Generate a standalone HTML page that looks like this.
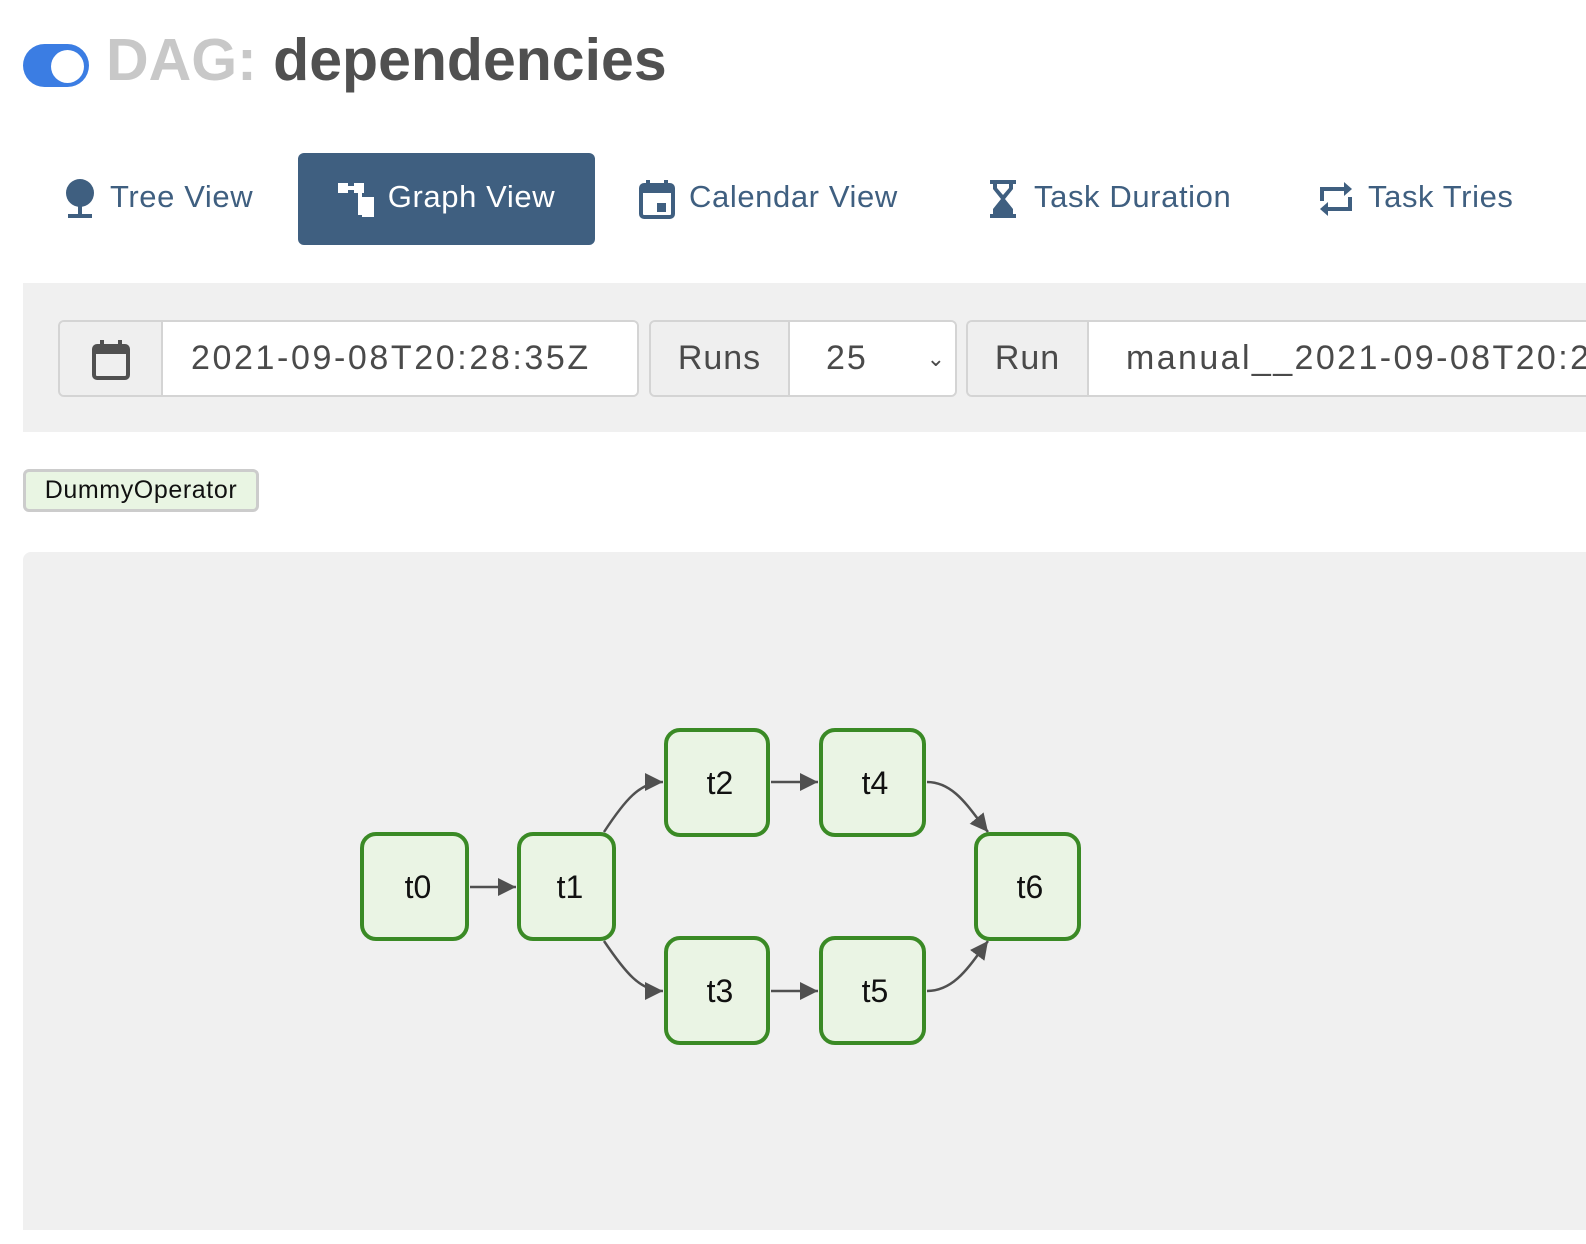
<!DOCTYPE html>
<html><head><meta charset="utf-8"><style>
body{margin:0;width:1586px;height:1244px;background:#fff;font-family:"Liberation Sans",sans-serif;position:relative;overflow:hidden}
.a{position:absolute}
.tab{position:absolute;top:153px;height:92px;line-height:88px;font-size:31px;color:#3f5f80;white-space:nowrap;letter-spacing:0.6px}
.grp{position:absolute;top:320px;height:73px;border:2px solid #d4d4d4;border-radius:6px;display:flex;overflow:hidden;font-size:34px;color:#4a4a4a;line-height:73px}
.ad{background:#efefef;border-right:2px solid #d4d4d4;text-align:center;flex-shrink:0}
.val{background:#fff}
</style></head><body>
<div class="a" style="left:23px;top:44px;width:66px;height:43px;border-radius:22px;background:#3b7de3"></div>
<div class="a" style="left:51px;top:50px;width:33px;height:33px;border-radius:50%;background:#fff"></div>
<div class="a" style="left:106px;top:20px;font-size:59px;font-weight:bold;line-height:80px;white-space:nowrap"><span style="color:#c8c8c8">DAG:</span> <span style="color:#505050">dependencies</span></div>

<div class="tab" style="left:64px"><svg width="32" height="40" viewBox="0 0 32 40" style="vertical-align:middle;margin-right:14px"><ellipse cx="16" cy="14" rx="14" ry="14" fill="#3f5f80"/><rect x="14" y="24" width="4" height="12" fill="#3f5f80"/><rect x="4" y="35" width="24" height="4" fill="#3f5f80"/></svg>Tree View</div>
<div class="tab" style="left:298px;width:297px;background:#3f5f80;border-radius:6px;color:#fff;text-align:center"><svg width="40" height="36" viewBox="0 0 40 36" style="vertical-align:middle;margin-right:10px"><g fill="#fff"><rect x="0" y="2" width="10" height="10"/><rect x="10" y="5" width="6" height="4"/><rect x="16" y="2" width="10" height="10"/><rect x="20" y="12" width="4" height="22"/><rect x="24" y="16" width="12" height="10"/><rect x="24" y="26" width="12" height="10"/></g></svg>Graph View</div>
<div class="tab" style="left:639px"><svg width="36" height="40" viewBox="0 0 36 40" style="vertical-align:middle;margin-right:14px"><rect x="2" y="6" width="32" height="32" rx="3" fill="none" stroke="#3f5f80" stroke-width="4"/><rect x="2" y="6" width="32" height="8" fill="#3f5f80"/><rect x="7" y="1" width="4" height="8" fill="#3f5f80"/><rect x="25" y="1" width="4" height="8" fill="#3f5f80"/><rect x="18" y="24" width="9" height="9" fill="#3f5f80"/></svg>Calendar View</div>
<div class="tab" style="left:988px"><svg width="30" height="40" viewBox="0 0 30 40" style="vertical-align:middle;margin-right:16px"><path d="M2 1H28V5H25V10L17 20L25 30V35H28V39H2V35H5V30L13 20L5 10V5H2Z" fill="#3f5f80"/><path d="M9 5H21V9L15 16L9 9Z" fill="#fff"/></svg>Task Duration</div>
<div class="tab" style="left:1318px"><svg width="36" height="40" viewBox="0 0 36 40" style="vertical-align:middle;margin-right:14px"><path d="M4 22V10H28" fill="none" stroke="#3f5f80" stroke-width="4"/><path d="M26 3L34 10L26 17Z" fill="#3f5f80"/><path d="M32 18V30H8" fill="none" stroke="#3f5f80" stroke-width="4"/><path d="M10 23L2 30L10 37Z" fill="#3f5f80"/></svg>Task Tries</div>

<div class="a" style="left:23px;top:283px;width:1563px;height:149px;background:#f0f0f0"></div>
<div class="grp" style="left:58px;width:577px"><div class="ad" style="width:101px"><svg width="40" height="42" viewBox="0 0 40 42" style="vertical-align:middle"><rect x="3" y="7" width="34" height="32" rx="3" fill="none" stroke="#505050" stroke-width="4"/><rect x="3" y="7" width="34" height="8" fill="#505050"/><rect x="9" y="1" width="4" height="8" fill="#505050"/><rect x="27" y="1" width="4" height="8" fill="#505050"/></svg></div><div class="val" style="flex:1;padding-left:28px;letter-spacing:2.6px">2021-09-08T20:28:35Z</div></div>
<div class="grp" style="left:649px;width:304px"><div class="ad" style="width:137px;letter-spacing:1px">Runs</div><div class="val" style="flex:1;padding-left:36px;position:relative;letter-spacing:2px">25<span style="position:absolute;right:8px;top:0;font-size:22px">&#8964;</span></div></div>
<div class="grp" style="left:966px;width:640px;border-right:none;border-radius:6px 0 0 6px"><div class="ad" style="width:119px;letter-spacing:1px">Run</div><div class="val" style="flex:1;padding-left:37px;white-space:nowrap;letter-spacing:2.4px;overflow:hidden">manual__2021-09-08T20:28:35</div></div>

<div class="a" style="left:23px;top:469px;width:230px;height:37px;border:3px solid #ccc;border-radius:6px;background:#e9f5e3;font-size:25px;line-height:37px;text-align:center;color:#111;letter-spacing:0.6px">DummyOperator</div>

<div class="a" style="left:23px;top:552px;width:1563px;height:678px;background:#f0f0f0;border-radius:8px 0 0 0"></div>
<svg class="a" style="left:0;top:0" width="1586" height="1244">
<defs><marker id="m" viewBox="0 0 10 10" refX="10" refY="5" markerWidth="18" markerHeight="18" markerUnits="userSpaceOnUse" orient="auto"><path d="M0 0L10 5L0 10Z" fill="#505050"/></marker></defs>
<g fill="none" stroke="#505050" stroke-width="2.5" marker-end="url(#m)">
<path d="M470 887H516"/>
<path d="M604 832C625 800 640 782 663 782"/>
<path d="M604 941C625 972 640 991 663 991"/>
<path d="M771 782H818"/>
<path d="M771 991H818"/>
<path d="M927 782C955 782 970 810 988 832"/>
<path d="M927 991C955 991 970 965 988 941"/>
</g>
<g fill="#eaf4e4" stroke="#3a8a25" stroke-width="4">
<rect x="362" y="834" width="105" height="105" rx="14"/>
<rect x="519" y="834" width="95" height="105" rx="14"/>
<rect x="666" y="730" width="102" height="105" rx="14"/>
<rect x="821" y="730" width="103" height="105" rx="14"/>
<rect x="666" y="938" width="102" height="105" rx="14"/>
<rect x="821" y="938" width="103" height="105" rx="14"/>
<rect x="976" y="834" width="103" height="105" rx="14"/>
</g>
<g font-family="Liberation Sans,sans-serif" font-size="32" fill="#111" text-anchor="middle">
<text x="418" y="898">t0</text><text x="570" y="898">t1</text><text x="720" y="794">t2</text><text x="875" y="794">t4</text><text x="720" y="1002">t3</text><text x="875" y="1002">t5</text><text x="1030" y="898">t6</text>
</g></svg>
</body></html>
